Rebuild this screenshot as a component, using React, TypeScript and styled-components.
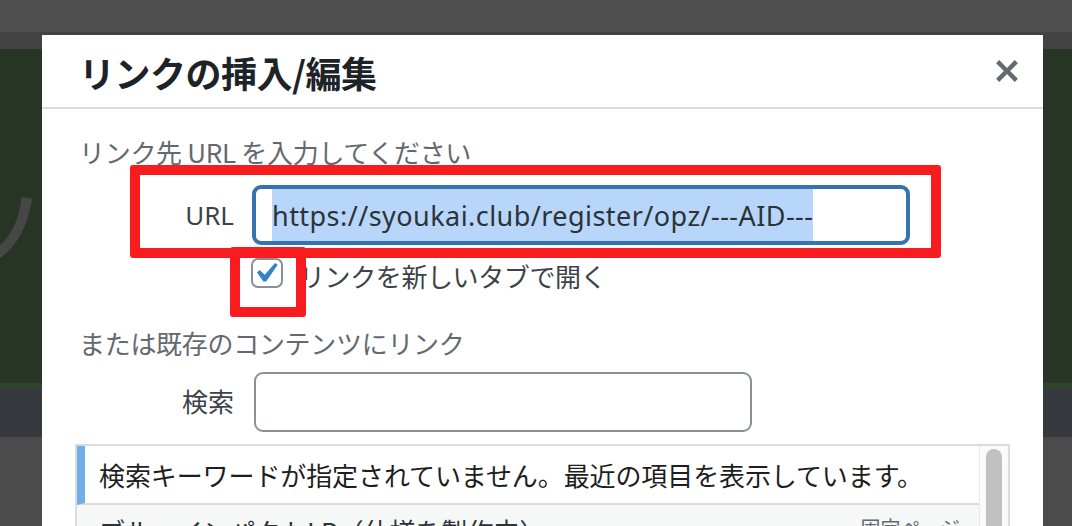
import React from "react";
import styled, { createGlobalStyle } from "styled-components";

const GlobalStyle = createGlobalStyle`
  html, body {
    margin: 0;
    padding: 0;
    width: 1072px;
    height: 526px;
    overflow: hidden;
    background: #4b4b4b;
  }
  body {
    font-family: "Noto Sans CJK JP", "Noto Sans", sans-serif;
  }
  #root { width: 1072px; height: 526px; }
`;

const Page = styled.div`
  position: relative;
  width: 1072px;
  height: 526px;
  overflow: hidden;
  display: flex;
  flex-direction: column;
`;

const TopBar = styled.div`
  flex: none;
  height: 32px;
  background: #4f4f4f;
`;

const SubBar = styled.div`
  flex: none;
  height: 17px;
  background: #424242;
`;

const Hero = styled.div`
  flex: none;
  box-sizing: border-box;
  height: 339px;
  background: #283426;
  border-bottom: 5px solid #2e4529;
  overflow: hidden;
`;

const HeroGlyph = styled.span`
  display: block;
  margin: 130px 0 0 -45px;
  font-size: 90px;
  line-height: 1;
  font-weight: 500;
  color: #474747;
`;

const Band = styled.div`
  flex: none;
  height: 49px;
  background: #363a3e;
`;

const Rest = styled.div`
  flex: 1;
  background: #4b4b4b;
`;

const Modal = styled.div`
  position: absolute;
  left: 42px;
  top: 35px;
  bottom: 0;
  width: 1001px;
  background: #fff;
  display: flex;
  flex-direction: column;
  overflow: hidden;
`;

const Header = styled.div`
  flex: none;
  height: 72px;
  display: flex;
  align-items: center;
  justify-content: space-between;
  padding: 0 25px 0 37px;
  border-bottom: 2px solid #dcdcde;
`;

const Title = styled.h1`
  margin: 0;
  padding-top: 2px;
  font-size: 36px;
  line-height: 1;
  font-weight: 700;
  color: #1d2327;
  letter-spacing: -0.5px;
`;

const CloseButton = styled.button`
  width: 22px;
  height: 22px;
  padding: 0;
  border: 0;
  background: none;
  display: flex;
`;

const Body = styled.div`
  flex: 1;
  min-height: 0;
  padding: 25px 33px 0 37px;
  display: flex;
  flex-direction: column;
`;

const SectionLabel = styled.p<{ $mt?: number }>`
  margin: ${(p) => p.$mt ?? 0}px 0 0;
  font-size: 26px;
  line-height: 36px;
  color: #646970;
  letter-spacing: -0.3px;
`;

const FieldRow = styled.div<{ $mt: number; $gap: number }>`
  display: flex;
  align-items: center;
  gap: ${(p) => p.$gap}px;
  margin-top: ${(p) => p.$mt}px;
`;

const FieldLabel = styled.label`
  flex: none;
  width: 155px;
  text-align: right;
  font-size: 26px;
  line-height: 36px;
  color: #3c434a;
  font-family: "Noto Sans", "Noto Sans CJK JP", sans-serif;
`;

const UrlBox = styled.div`
  flex: none;
  box-sizing: border-box;
  width: 658px;
  height: 60px;
  border: 4px solid #3873b1;
  border-radius: 9px;
  padding-left: 16px;
  display: flex;
  align-items: stretch;
  overflow: hidden;
`;

const Selected = styled.span`
  display: flex;
  align-items: center;
  background: #b8d6f9;
  color: #2c3338;
  font-family: "Noto Sans", sans-serif;
  font-size: 27px;
  letter-spacing: 0.45px;
  white-space: nowrap;
`;

const SearchBox = styled.div`
  flex: none;
  box-sizing: border-box;
  width: 498px;
  height: 60px;
  border: 2px solid #8c8f94;
  border-radius: 9px;
  background: #fff;
`;

const CheckRow = styled.div`
  display: flex;
  align-items: flex-start;
  gap: 16px;
  margin-top: 13px;
  padding-left: 172px;
`;

const CheckBox = styled.span`
  flex: none;
  box-sizing: border-box;
  width: 32px;
  height: 30px;
  border: 2px solid #8c8f94;
  border-radius: 7px;
  background: #fff;
  display: flex;
  align-items: center;
  justify-content: center;
`;

const CheckText = styled.span`
  font-size: 26px;
  line-height: 36px;
  color: #3c434a;
  letter-spacing: -0.4px;
`;

const Results = styled.div`
  flex: 1;
  min-height: 0;
  margin: 12px 0 0 -4px;
  border: 2px solid #dcdcde;
  border-bottom: 0;
  display: flex;
`;

const ResultRows = styled.div`
  flex: 1;
  display: flex;
  flex-direction: column;
`;

const NoticeRow = styled.div`
  flex: none;
  height: 57px;
  border-left: 8px solid #72aee6;
  border-bottom: 2px solid #dcdcde;
  padding-left: 14px;
  display: flex;
  align-items: center;
  font-size: 26px;
  color: #1e1e1e;
  letter-spacing: -0.1px;
`;

const ItemRow = styled.div`
  flex: 1;
  background: #f6f7f7;
  display: flex;
  justify-content: space-between;
  align-items: flex-start;
  padding: 8px 19px 0 22px;
`;

const ItemTitle = styled.span`
  font-size: 26px;
  line-height: 36px;
  color: #2c3338;
`;

const ItemInfo = styled.span`
  font-size: 20px;
  line-height: 28px;
  color: #646970;
  margin-top: 1px;
`;

const ScrollTrack = styled.div`
  flex: none;
  width: 28px;
  border-left: 1px solid #e8e8e8;
  background: #fafafa;
  display: flex;
  justify-content: center;
`;

const ScrollThumb = styled.div`
  width: 16px;
  height: 200px;
  margin-top: 3px;
  border-radius: 8px;
  background: #c1c1c1;
`;

const Annotation = styled.div<{ $x: number; $y: number; $w: number; $h: number }>`
  position: absolute;
  left: ${(p) => p.$x}px;
  top: ${(p) => p.$y}px;
  width: ${(p) => p.$w}px;
  height: ${(p) => p.$h}px;
  box-sizing: border-box;
  border: 10px solid #f91c1f;
  border-radius: 3px;
  pointer-events: none;
`;

const CloseIcon = () => (
  <svg width="22" height="22" viewBox="5 5 10 10" aria-hidden="true">
    <path
      fill="#646970"
      d="M14.95 6.46L11.41 10l3.54 3.54-1.41 1.41L10 11.42l-3.53 3.53-1.42-1.42L8.58 10 5.05 6.47l1.42-1.42L10 8.58l3.54-3.53z"
    />
  </svg>
);

const CheckIcon = () => (
  <svg width="24" height="22" viewBox="4.8 4.4 12 11" aria-hidden="true">
    <path fill="#3582c4" d="M14.83 4.89l1.34.94-5.81 8.38H9.02L5.78 9.67l1.34-1.25 2.57 2.4z" />
  </svg>
);

export default function App() {
  return (
    <>
      <GlobalStyle />
      <Page>
        <TopBar />
        <SubBar />
        <Hero>
          <HeroGlyph>ソ</HeroGlyph>
        </Hero>
        <Band />
        <Rest />

        <Modal>
          <Header>
            <Title>リンクの挿入/編集</Title>
            <CloseButton aria-label="閉じる">
              <CloseIcon />
            </CloseButton>
          </Header>
          <Body>
            <SectionLabel>リンク先 URL を入力してください</SectionLabel>
            <FieldRow $mt={15} $gap={18}>
              <FieldLabel>URL</FieldLabel>
              <UrlBox>
                <Selected>https://syoukai.club/register/opz/---AID---</Selected>
              </UrlBox>
            </FieldRow>
            <CheckRow>
              <CheckBox>
                <CheckIcon />
              </CheckBox>
              <CheckText>リンクを新しいタブで開く</CheckText>
            </CheckRow>
            <SectionLabel $mt={31}>または既存のコンテンツにリンク</SectionLabel>
            <FieldRow $mt={11} $gap={20}>
              <FieldLabel>検索</FieldLabel>
              <SearchBox />
            </FieldRow>
            <Results>
              <ResultRows>
                <NoticeRow>検索キーワードが指定されていません。最近の項目を表示しています。</NoticeRow>
                <ItemRow>
                  <ItemTitle>ブルーインパクトLP（仕様を製作中）</ItemTitle>
                  <ItemInfo>固定ページ</ItemInfo>
                </ItemRow>
              </ResultRows>
              <ScrollTrack>
                <ScrollThumb />
              </ScrollTrack>
            </Results>
          </Body>
          <Annotation $x={88} $y={130} $w={811} $h={93} />
          <Annotation $x={188} $y={212} $w={76} $h={70} />
        </Modal>
      </Page>
    </>
  );
}
